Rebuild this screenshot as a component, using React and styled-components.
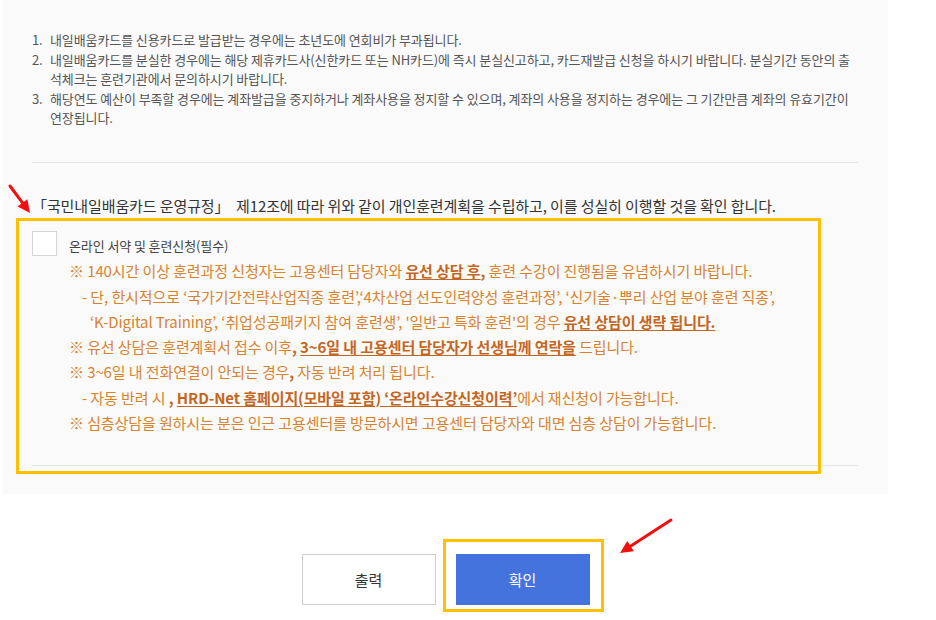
import styled, { createGlobalStyle } from "styled-components"

const GlobalStyle = createGlobalStyle`
    body {
        margin: 0;
        background: #ffffff;
        font-family: "Noto Sans CJK KR", "Noto Sans", sans-serif;
    }
`

const Page = styled.div`
    position: relative;
    width: 936px;
    height: 620px;
    overflow: hidden;
`

const Wrapper = styled.div`
    width: 885px;
    margin-left: 3px;
`

const Panel = styled.div`
    position: relative;
    background: #fafafa;
    padding: 30px 30px 28px 29px;
    letter-spacing: -0.1px;
`

const NoticeList = styled.ol`
    margin: 0;
    padding: 0;
    list-style: none;
    font-size: 13px;
    line-height: 19.5px;
    color: #555;
`

const NoticeItem = styled.li`
    display: flex;

    > span:first-child {
        flex: 0 0 18px;
    }
`

const Divider = styled.hr`
    margin: ${({top}) => top}px 0 0;
    border: none;
    border-top: 1px solid #e6e6e6;
`

const Statement = styled.p`
    margin: 33px 0 0;
    font-size: 15px;
    line-height: 20px;
    color: #333;
    white-space: nowrap;
`

const AgreeRow = styled.div`
    display: flex;
    gap: 12px;
    margin-top: 15px;
`

const CheckBox = styled.span`
    flex: 0 0 25px;
    height: 25px;
    box-sizing: border-box;
    background: #fff;
    border: 1px solid #d4d4d4;
`

const AgreeText = styled.div`
    padding-top: 2.5px;
    font-size: 15px;
    line-height: 25.3px;
    white-space: nowrap;
`

const AgreeLabel = styled.div`
    font-size: 13px;
    color: #444;
`

const Caution = styled.div`
    color: #d8822f;
    padding-left: ${({indent}) => indent || 0}px;
`

const Strong = styled.b`
    font-weight: 700;
    color: #c4661f;
`

const Under = styled.u`
    text-underline-offset: 2px;
`

const Highlight = styled.div`
    position: absolute;
    box-sizing: border-box;
    border: 3px solid #ffc000;
    pointer-events: none;
`

const BoxHighlight = styled(Highlight)`
    top: 218px;
    left: 13px;
    width: 805px;
    height: 256px;
`

const ButtonHighlight = styled(Highlight)`
    top: -15px;
    left: -13px;
    right: -14px;
    bottom: -7px;
`

const ButtonRow = styled.div`
    display: flex;
    justify-content: center;
    gap: 20px;
    margin-top: 60px;
`

const ButtonWrap = styled.div`
    position: relative;
`

const Button = styled.button`
    width: 134px;
    height: 51px;
    box-sizing: border-box;
    border: 1px solid #cfcfcf;
    background: #fff;
    color: #333;
    font-family: inherit;
    font-size: 15px;
    cursor: pointer;
`

const PrimaryButton = styled(Button)`
    border-color: #4473de;
    background: #4473de;
    color: #fff;
`

const Arrow = styled.svg`
    position: absolute;
    left: 0;
    top: 0;
    overflow: visible;
`

const RedArrow = ({x1, y1, x2, y2}) => {
    const angle = Math.atan2(y2 - y1, x2 - x1)
    const len = 14
    const spread = 0.45
    const p1 = [x2 - len * Math.cos(angle - spread), y2 - len * Math.sin(angle - spread)]
    const p2 = [x2 - len * Math.cos(angle + spread), y2 - len * Math.sin(angle + spread)]
    const bx = x2 - (len - 3) * Math.cos(angle)
    const by = y2 - (len - 3) * Math.sin(angle)
    return (
        <Arrow width="1" height="1">
            <line x1={x1} y1={y1} x2={bx} y2={by} stroke="#f01010" strokeWidth="3" strokeLinecap="round" />
            <polygon points={`${x2},${y2} ${p1[0]},${p1[1]} ${p2[0]},${p2[1]}`} fill="#f01010" />
        </Arrow>
    )
}

export default function App() {
    return (
        <Page>
            <GlobalStyle />
            <Wrapper>
                <Panel>
                    <NoticeList>
                        <NoticeItem>
                            <span>1.</span>
                            <span>내일배움카드를 신용카드로 발급받는 경우에는 초년도에 연회비가 부과됩니다.</span>
                        </NoticeItem>
                        <NoticeItem>
                            <span>2.</span>
                            <span>내일배움카드를 분실한 경우에는 해당 제휴카드사(신한카드 또는 NH카드)에 즉시 분실신고하고, 카드재발급 신청을 하시기 바랍니다. 분실기간 동안의 출석체크는 훈련기관에서 문의하시기 바랍니다.</span>
                        </NoticeItem>
                        <NoticeItem>
                            <span>3.</span>
                            <span>해당연도 예산이 부족할 경우에는 계좌발급을 중지하거나 계좌사용을 정지할 수 있으며, 계좌의 사용을 정지하는 경우에는 그 기간만큼 계좌의 유효기간이 연장됩니다.</span>
                        </NoticeItem>
                    </NoticeList>

                    <Divider top={34} />

                    <Statement>
                        「국민내일배움카드 운영규정」&nbsp; 제12조에 따라 위와 같이 개인훈련계획을 수립하고, 이를 성실히 이행할 것을 확인 합니다.
                    </Statement>

                    <AgreeRow>
                        <CheckBox />
                        <AgreeText>
                            <AgreeLabel>온라인 서약 및 훈련신청(필수)</AgreeLabel>
                            <Caution>
                                ※ 140시간 이상 훈련과정 신청자는 고용센터 담당자와 <Strong><Under>유선 상담 후</Under>,</Strong> 훈련 수강이 진행됨을 유념하시기 바랍니다.
                            </Caution>
                            <Caution indent={13}>
                                - 단, 한시적으로 ‘국가기간전략산업직종 훈련’,‘4차산업 선도인력양성 훈련과정’, ‘신기술·뿌리 산업 분야 훈련 직종’,
                            </Caution>
                            <Caution indent={21}>
                                ‘K-Digital Training’, ‘취업성공패키지 참여 훈련생’, '일반고 특화 훈련'의 경우 <Strong><Under>유선 상담이 생략 됩니다.</Under></Strong>
                            </Caution>
                            <Caution>
                                ※ 유선 상담은 훈련계획서 접수 이후<Strong>, <Under>3~6일 내 고용센터 담당자가 선생님께 연락을</Under></Strong> 드립니다.
                            </Caution>
                            <Caution>
                                ※ 3~6일 내 전화연결이 안되는 경우<Strong>,</Strong> 자동 반려 처리 됩니다.
                            </Caution>
                            <Caution indent={13}>
                                - 자동 반려 시 <Strong>, <Under>HRD-Net 홈페이지(모바일 포함) ‘온라인수강신청이력’</Under></Strong>에서 재신청이 가능합니다.
                            </Caution>
                            <Caution>
                                ※ 심층상담을 원하시는 분은 인근 고용센터를 방문하시면 고용센터 담당자와 대면 심층 상담이 가능합니다.
                            </Caution>
                        </AgreeText>
                    </AgreeRow>

                    <Divider top={30} />

                    <BoxHighlight />
                </Panel>

                <ButtonRow>
                    <Button>출력</Button>
                    <ButtonWrap>
                        <PrimaryButton>확인</PrimaryButton>
                        <ButtonHighlight />
                    </ButtonWrap>
                </ButtonRow>
            </Wrapper>

            <RedArrow x1={10} y1={186} x2={30} y2={213} />
            <RedArrow x1={671} y1={520} x2={620} y2={553} />
        </Page>
    )
}
